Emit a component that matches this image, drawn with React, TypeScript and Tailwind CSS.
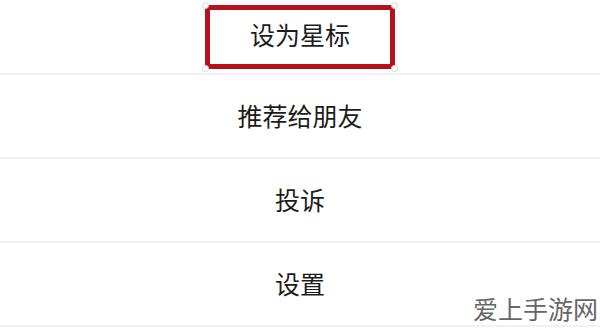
import React from 'react'

const items = ['设为星标', '推荐给朋友', '投诉', '设置']

function Handle({ className }: { className: string }) {
  return <span className={`absolute h-[7px] w-[7px] rounded-full bg-white border border-[#d8d8d8] ${className}`} />
}

export default function App() {
  return (
    <div
      className="relative h-[333px] w-[600px] overflow-hidden bg-white"
      style={{ fontFamily: '"Noto Sans CJK SC", "Noto Sans", sans-serif' }}
    >
      <div className="-mt-[9px] flex flex-col">
        {items.map((label, i) => (
          <div
            key={label}
            className="flex h-[84px] items-center justify-center border-b-2 border-[#f1f1f1] text-[25px] text-[#1c1c1c]"
          >
            {i === 0 ? (
              // highlighted item: red annotation frame around the label
              <div className="relative mt-[10px] flex h-[64px] w-[190px] items-center justify-center rounded-[3px] border-[5px] border-[#b7111c] pb-[5px]">
                {label}
                <Handle className="-left-[8px] -top-[8px]" />
                <Handle className="-right-[8px] -top-[8px]" />
                <Handle className="-left-[8px] -bottom-[8px]" />
                <Handle className="-right-[8px] -bottom-[8px]" />
              </div>
            ) : (
              label
            )}
          </div>
        ))}
      </div>
      {/* watermark */}
      <div className="absolute right-[2px] top-[296px] text-[25px] leading-none text-[#666]">
        爱上手游网
      </div>
    </div>
  )
}
